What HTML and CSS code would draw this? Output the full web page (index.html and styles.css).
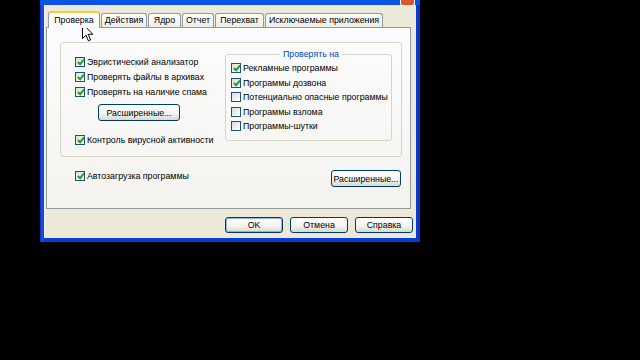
FILE: index.html
```html
<!DOCTYPE html>
<html lang="ru">
<head>
    <meta charset="UTF-8">
    <title>Настройки</title>
    <link rel="stylesheet" href="styles.css">
</head>
<body>
<div class="screen">
  <div class="window">
    <div class="titlebar"><div class="close"></div></div>
    <div class="client">
      <div class="tabs">
        <div class="tab active tab-scan">Проверка</div>
        <div class="tab tab-actions">Действия</div>
        <div class="tab tab-core">Ядро</div>
        <div class="tab tab-report">Отчет</div>
        <div class="tab tab-hook">Перехват</div>
        <div class="tab tab-excl">Исключаемые приложения</div>
      </div>
      <div class="panel">
        <div class="frame">
          <div class="col">
            <div class="item"><span class="box on"></span>Эвристический анализатор</div>
            <div class="item"><span class="box on"></span>Проверять файлы в архивах</div>
            <div class="item"><span class="box on"></span>Проверять на наличие спама</div>
            <button class="btn btn-more">Расширенные...</button>
            <div class="item item-gap"><span class="box on"></span>Контроль вирусной активности</div>
          </div>
          <fieldset class="group">
            <legend>Проверять на</legend>
            <div class="item item-sm"><span class="box on"></span>Рекламные программы</div>
            <div class="item item-sm"><span class="box on"></span>Программы дозвона</div>
            <div class="item item-sm"><span class="box"></span>Потенциально опасные программы</div>
            <div class="item item-sm"><span class="box"></span>Программы взлома</div>
            <div class="item item-sm"><span class="box"></span>Программы-шутки</div>
          </fieldset>
        </div>
        <div class="row">
          <div class="item"><span class="box on"></span>Автозагрузка программы</div>
          <button class="btn btn-side">Расширенные...</button>
        </div>
      </div>
      <div class="actions">
        <button class="btn btn-dlg default">OK</button>
        <button class="btn btn-dlg">Отмена</button>
        <button class="btn btn-dlg">Справка</button>
      </div>
    </div>
  </div>
  <svg class="cursor" width="12" height="19" viewBox="0 0 12 19">
    <path d="M0.5 0.5 L0.5 15.5 L4 12.2 L6.4 17.8 L8.6 16.8 L6.2 11.3 L10.8 11.3 Z" fill="#fff" stroke="#000" stroke-width="1" stroke-linejoin="round"/>
  </svg>
</div>
</body>
</html>
```

FILE: styles.css
```css
body{
  margin: 0;
  background: #000;
  font-family: "Liberation Sans", Arial, sans-serif;
  font-size: 8.8px;
  color: #000;
}

.screen{
  width: 640px;
  height: 360px;
  position: relative;
  overflow: hidden;
}

.window{
  margin-left: 40px;
  width: 380px;
  padding: 0 4px 4px;
  box-sizing: border-box;
  background: linear-gradient(90deg, #0a2fb8 0, #1654e6 2px, #0b3cd6 4px, #0b3cd6 376px, #0a2fb8 380px);
}

.titlebar{
  height: 5px;
  display: flex;
  justify-content: flex-end;
  background: #0b52e6;
  margin: 0 -4px;
  padding: 0 5px;
}

.close{
  width: 15px;
  height: 6px;
  box-sizing: border-box;
  background: #d8582e;
  border: 1px solid #f3f3f3;
  border-top: none;
  border-radius: 0 0 3px 3px;
}

.client{
  height: 233px;
  box-sizing: border-box;
  padding: 6px 3px 0 2px;
  background: #ece9d8;
  box-shadow: inset 1px 0 0 #f6f4ec;
}

.tabs{
  display: flex;
  align-items: flex-end;
  height: 16px;
  padding-left: 2px;
}

.tab{
  height: 14px;
  line-height: 13px;
  margin-right: 1px;
  box-sizing: border-box;
  border: 1px solid #919b9c;
  border-bottom: none;
  border-radius: 3px 3px 0 0;
  background: linear-gradient(#ffffff, #eeede5);
  text-align: center;
  white-space: nowrap;
}

.tab.active{
  height: 17px;
  line-height: 14px;
  margin-bottom: -1px;
  border-top: 2px solid #ffc83c;
  background: #fcfcfe;
  position: relative;
  z-index: 1;
}

.tab-scan{ width: 52px; }
.tab-actions{ width: 46px; }
.tab-core{ width: 33px; }
.tab-report{ width: 32px; }
.tab-hook{ width: 49px; }
.tab-excl{ width: 118px; }

.panel{
  height: 182px;
  margin-right: 2px;
  box-sizing: border-box;
  border: 1px solid #919b9c;
  background: linear-gradient(#fcfcfe, #f4f3ee);
}

.frame{
  display: flex;
  height: 115px;
  margin: 14px 8px 0 13px;
  padding: 6px 9px 0 14px;
  box-sizing: border-box;
  border: 1px solid #d6d6c6;
  border-radius: 3px;
}

.col{
  padding-top: 5px;
}

.item{
  display: flex;
  align-items: center;
  height: 15px;
  white-space: nowrap;
}

.item-sm{
  height: 14.5px;
}

.item-gap{
  margin-top: 11px;
}

.box{
  flex: none;
  width: 10px;
  height: 10px;
  margin-right: 2px;
  box-sizing: border-box;
  border: 1px solid #1c5180;
  background: linear-gradient(135deg, #dcdcd7, #ffffff);
  position: relative;
}

.box.on::after{
  content: "";
  position: absolute;
  left: 2.5px;
  top: 0px;
  width: 2px;
  height: 5px;
  border: solid #21a121;
  border-width: 0 2px 2px 0;
  transform: rotate(40deg);
}

.group{
  margin: 0 0 0 auto;
  width: 167px;
  min-width: 0;
  padding: 1px 0 6px 5px;
  box-sizing: border-box;
  border: 1px solid #d6d6c6;
  border-radius: 3px;
  align-self: flex-start;
}

.group legend{
  margin: 0 auto;
  padding: 0 3px;
  line-height: 11px;
  color: #0046d5;
}

.btn{
  font: inherit;
  color: #000;
  height: 17px;
  padding: 0;
  box-sizing: border-box;
  border: 1px solid #003c74;
  border-radius: 3px;
  background: linear-gradient(#ffffff 0%, #f4f4f0 55%, #dcd7cb 100%);
}

.btn-more{
  display: block;
  width: 82px;
  margin: 5px 0 0 23px;
}

.row{
  display: flex;
  align-items: flex-start;
  margin: 11px 9px 0 28px;
}

.btn-side{
  width: 70px;
  margin: 2px 0 0 auto;
}

.actions{
  display: flex;
  justify-content: flex-end;
  gap: 7px;
  margin-top: 8px;
}

.btn-dlg{
  width: 58px;
  height: 16px;
}

.btn.default{
  box-shadow: inset 0 0 0 1px #8db2e3;
}

.cursor{
  position: absolute;
  left: 82px;
  top: 23px;
}
```
